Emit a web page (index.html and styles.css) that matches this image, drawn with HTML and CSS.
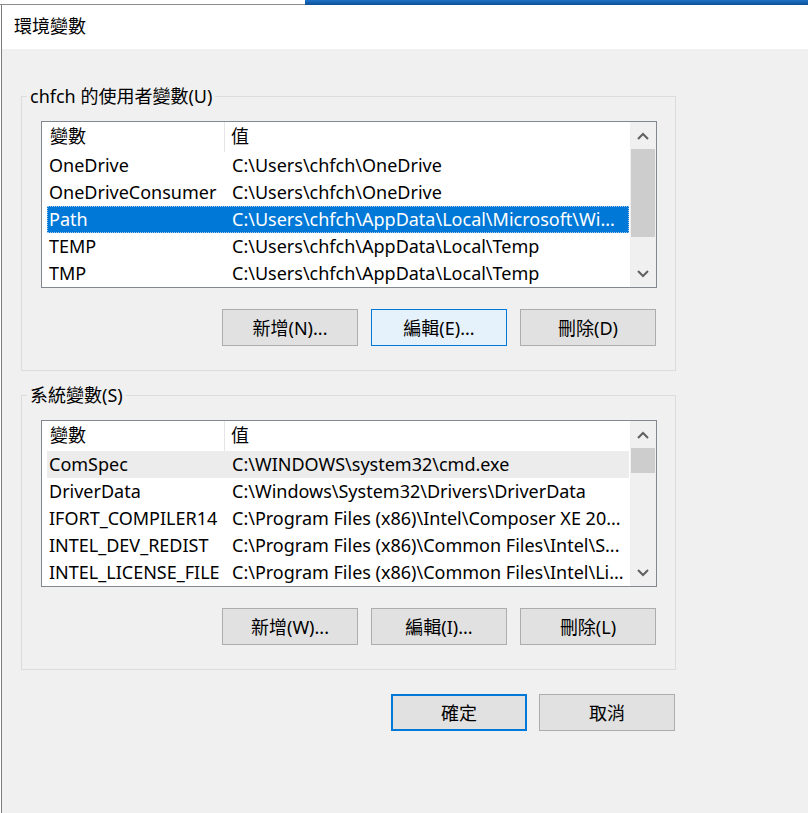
FILE: index.html
```html
<!DOCTYPE html>
<html lang="zh-Hant">
<head>
<meta charset="utf-8">
<title>環境變數</title>
<link rel="stylesheet" href="styles.css">
</head>
<body>
<div class="topstrip"><div class="strip-left"></div><div class="strip-blue"></div></div>
<div class="dialog">
  <div class="titlebar">環境變數</div>
  <div class="content">
    <fieldset class="group">
      <legend>chfch 的使用者變數(U)</legend>
      <div class="group-body">
        <div class="list">
          <div class="list-main">
            <div class="list-head"><div class="h1">變數</div><div class="h2">值</div></div>
            <div class="row"><div class="c1">OneDrive</div><div class="c2">C:\Users\chfch\OneDrive</div></div>
            <div class="row"><div class="c1">OneDriveConsumer</div><div class="c2">C:\Users\chfch\OneDrive</div></div>
            <div class="row sel"><div class="c1">Path</div><div class="c2">C:\Users\chfch\AppData\Local\Microsoft\Wi...</div></div>
            <div class="row"><div class="c1">TEMP</div><div class="c2">C:\Users\chfch\AppData\Local\Temp</div></div>
            <div class="row"><div class="c1">TMP</div><div class="c2">C:\Users\chfch\AppData\Local\Temp</div></div>
          </div>
          <div class="scrollbar">
            <div class="sb-btn sb-up"><svg width="12" height="8" viewBox="0 0 12 8"><polyline points="1,7 6,2 11,7" fill="none" stroke="#606060" stroke-width="2"/></svg></div>
            <div class="sb-track"><div class="sb-thumb thumb-user"></div></div>
            <div class="sb-btn"><svg width="12" height="8" viewBox="0 0 12 8"><polyline points="1,1 6,6 11,1" fill="none" stroke="#606060" stroke-width="2"/></svg></div>
          </div>
        </div>
        <div class="btn-row">
          <button class="btn">新增(N)...</button>
          <button class="btn hot">編輯(E)...</button>
          <button class="btn">刪除(D)</button>
        </div>
      </div>
    </fieldset>

    <fieldset class="group group2">
      <legend>系統變數(S)</legend>
      <div class="group-body">
        <div class="list">
          <div class="list-main">
            <div class="list-head"><div class="h1">變數</div><div class="h2">值</div></div>
            <div class="row inactive"><div class="c1">ComSpec</div><div class="c2">C:\WINDOWS\system32\cmd.exe</div></div>
            <div class="row"><div class="c1">DriverData</div><div class="c2">C:\Windows\System32\Drivers\DriverData</div></div>
            <div class="row"><div class="c1">IFORT_COMPILER14</div><div class="c2">C:\Program Files (x86)\Intel\Composer XE 20...</div></div>
            <div class="row"><div class="c1">INTEL_DEV_REDIST</div><div class="c2">C:\Program Files (x86)\Common Files\Intel\S...</div></div>
            <div class="row"><div class="c1">INTEL_LICENSE_FILE</div><div class="c2">C:\Program Files (x86)\Common Files\Intel\Li...</div></div>
          </div>
          <div class="scrollbar">
            <div class="sb-btn sb-up"><svg width="12" height="8" viewBox="0 0 12 8"><polyline points="1,7 6,2 11,7" fill="none" stroke="#606060" stroke-width="2"/></svg></div>
            <div class="sb-track"><div class="sb-thumb thumb-sys"></div></div>
            <div class="sb-btn"><svg width="12" height="8" viewBox="0 0 12 8"><polyline points="1,1 6,6 11,1" fill="none" stroke="#606060" stroke-width="2"/></svg></div>
          </div>
        </div>
        <div class="btn-row">
          <button class="btn">新增(W)...</button>
          <button class="btn">編輯(I)...</button>
          <button class="btn">刪除(L)</button>
        </div>
      </div>
    </fieldset>

    <div class="footer">
      <button class="btn default">確定</button>
      <button class="btn">取消</button>
    </div>
  </div>
</div>
</body>
</html>
```

FILE: styles.css
```css
html, body {
  margin: 0;
  padding: 0;
}
body {
  background: #ffffff;
  width: 808px;
  height: 813px;
  overflow: hidden;
  font-family: "Noto Sans", "Noto Sans CJK TC", sans-serif;
  font-size: 18px;
  color: #000;
}
.topstrip {
  display: flex;
  height: 5px;
}
.strip-left {
  width: 305px;
  box-sizing: border-box;
  border-bottom: 1px solid #8c8c8c;
  background: #ffffff;
}
.strip-blue {
  flex: 1;
  background: linear-gradient(#1c72c6, #0d4f98);
}
.dialog {
  margin-left: 1px;
  border-left: 1px solid #7c7c7c;
  height: 808px;
  background: #f0f0f0;
}
.titlebar {
  height: 44px;
  line-height: 42px;
  padding-left: 12px;
  background: #ffffff;
}
.content {
  background: #f0f0f0;
  padding-top: 35px;
}
.group {
  margin: 0 0 0 19px;
  padding: 0;
  width: 655px;
  box-sizing: border-box;
  border: 1px solid #dcdcdc;
  min-inline-size: 0;
}
.group2 {
  margin-top: 12px;
}
.group legend {
  margin-left: 5px;
  padding: 0 3px;
  line-height: 24px;
}
.group-body {
  padding: 13px 18px 24px 19px;
}
.list {
  display: flex;
  height: 167px;
  box-sizing: border-box;
  border: 1px solid #828790;
  background: #ffffff;
}
.list-main {
  flex: 1;
  overflow: hidden;
}
.list-head {
  display: flex;
  height: 30px;
  line-height: 29px;
}
.h1 {
  width: 183px;
  padding-left: 8px;
  box-sizing: border-box;
  border-right: 1px solid #e5e5e5;
}
.h2 {
  padding-left: 6px;
}
.row {
  display: flex;
  height: 27px;
  line-height: 26px;
  margin: 0 1px 0 5px;
  white-space: nowrap;
  overflow: hidden;
  box-sizing: border-box;
}
.c1 {
  width: 183px;
  padding-left: 2px;
  box-sizing: border-box;
  flex-shrink: 0;
}
.c2 {
  padding-left: 2px;
}
.row.sel {
  background: #0078d7;
  color: #ffffff;
  outline: 1px dotted #9cc6ee;
  outline-offset: -1px;
}
.row.inactive {
  background: #ececec;
}
.scrollbar {
  width: 26px;
  display: flex;
  flex-direction: column;
  background: #f0f0f0;
}
.sb-btn {
  height: 26px;
  display: flex;
  align-items: center;
  justify-content: center;
}
.sb-up {
  padding-top: 2px;
  box-sizing: border-box;
}
.sb-track {
  flex: 1;
  padding-top: 1px;
}
.sb-thumb {
  margin: 0 1px;
  background: #cdcdcd;
}
.thumb-user {
  height: 88px;
}
.thumb-sys {
  height: 25px;
}
.btn-row {
  display: flex;
  justify-content: flex-end;
  gap: 13px;
  margin-top: 21px;
  padding-right: 1px;
}
.btn {
  width: 136px;
  height: 37px;
  box-sizing: border-box;
  border: 1px solid #adadad;
  background: #e1e1e1;
  font-family: "Noto Sans", "Noto Sans CJK TC", sans-serif;
  font-size: 18px;
  color: #000;
  padding: 0;
  line-height: 34px;
}
.btn.hot {
  background: #e5f1fb;
  border-color: #0078d7;
}
.btn.default {
  border: 2px solid #0078d7;
}
.footer {
  display: flex;
  justify-content: flex-end;
  gap: 12px;
  width: 655px;
  margin: 24px 0 0 19px;
  padding-right: 1px;
  box-sizing: border-box;
}
```
